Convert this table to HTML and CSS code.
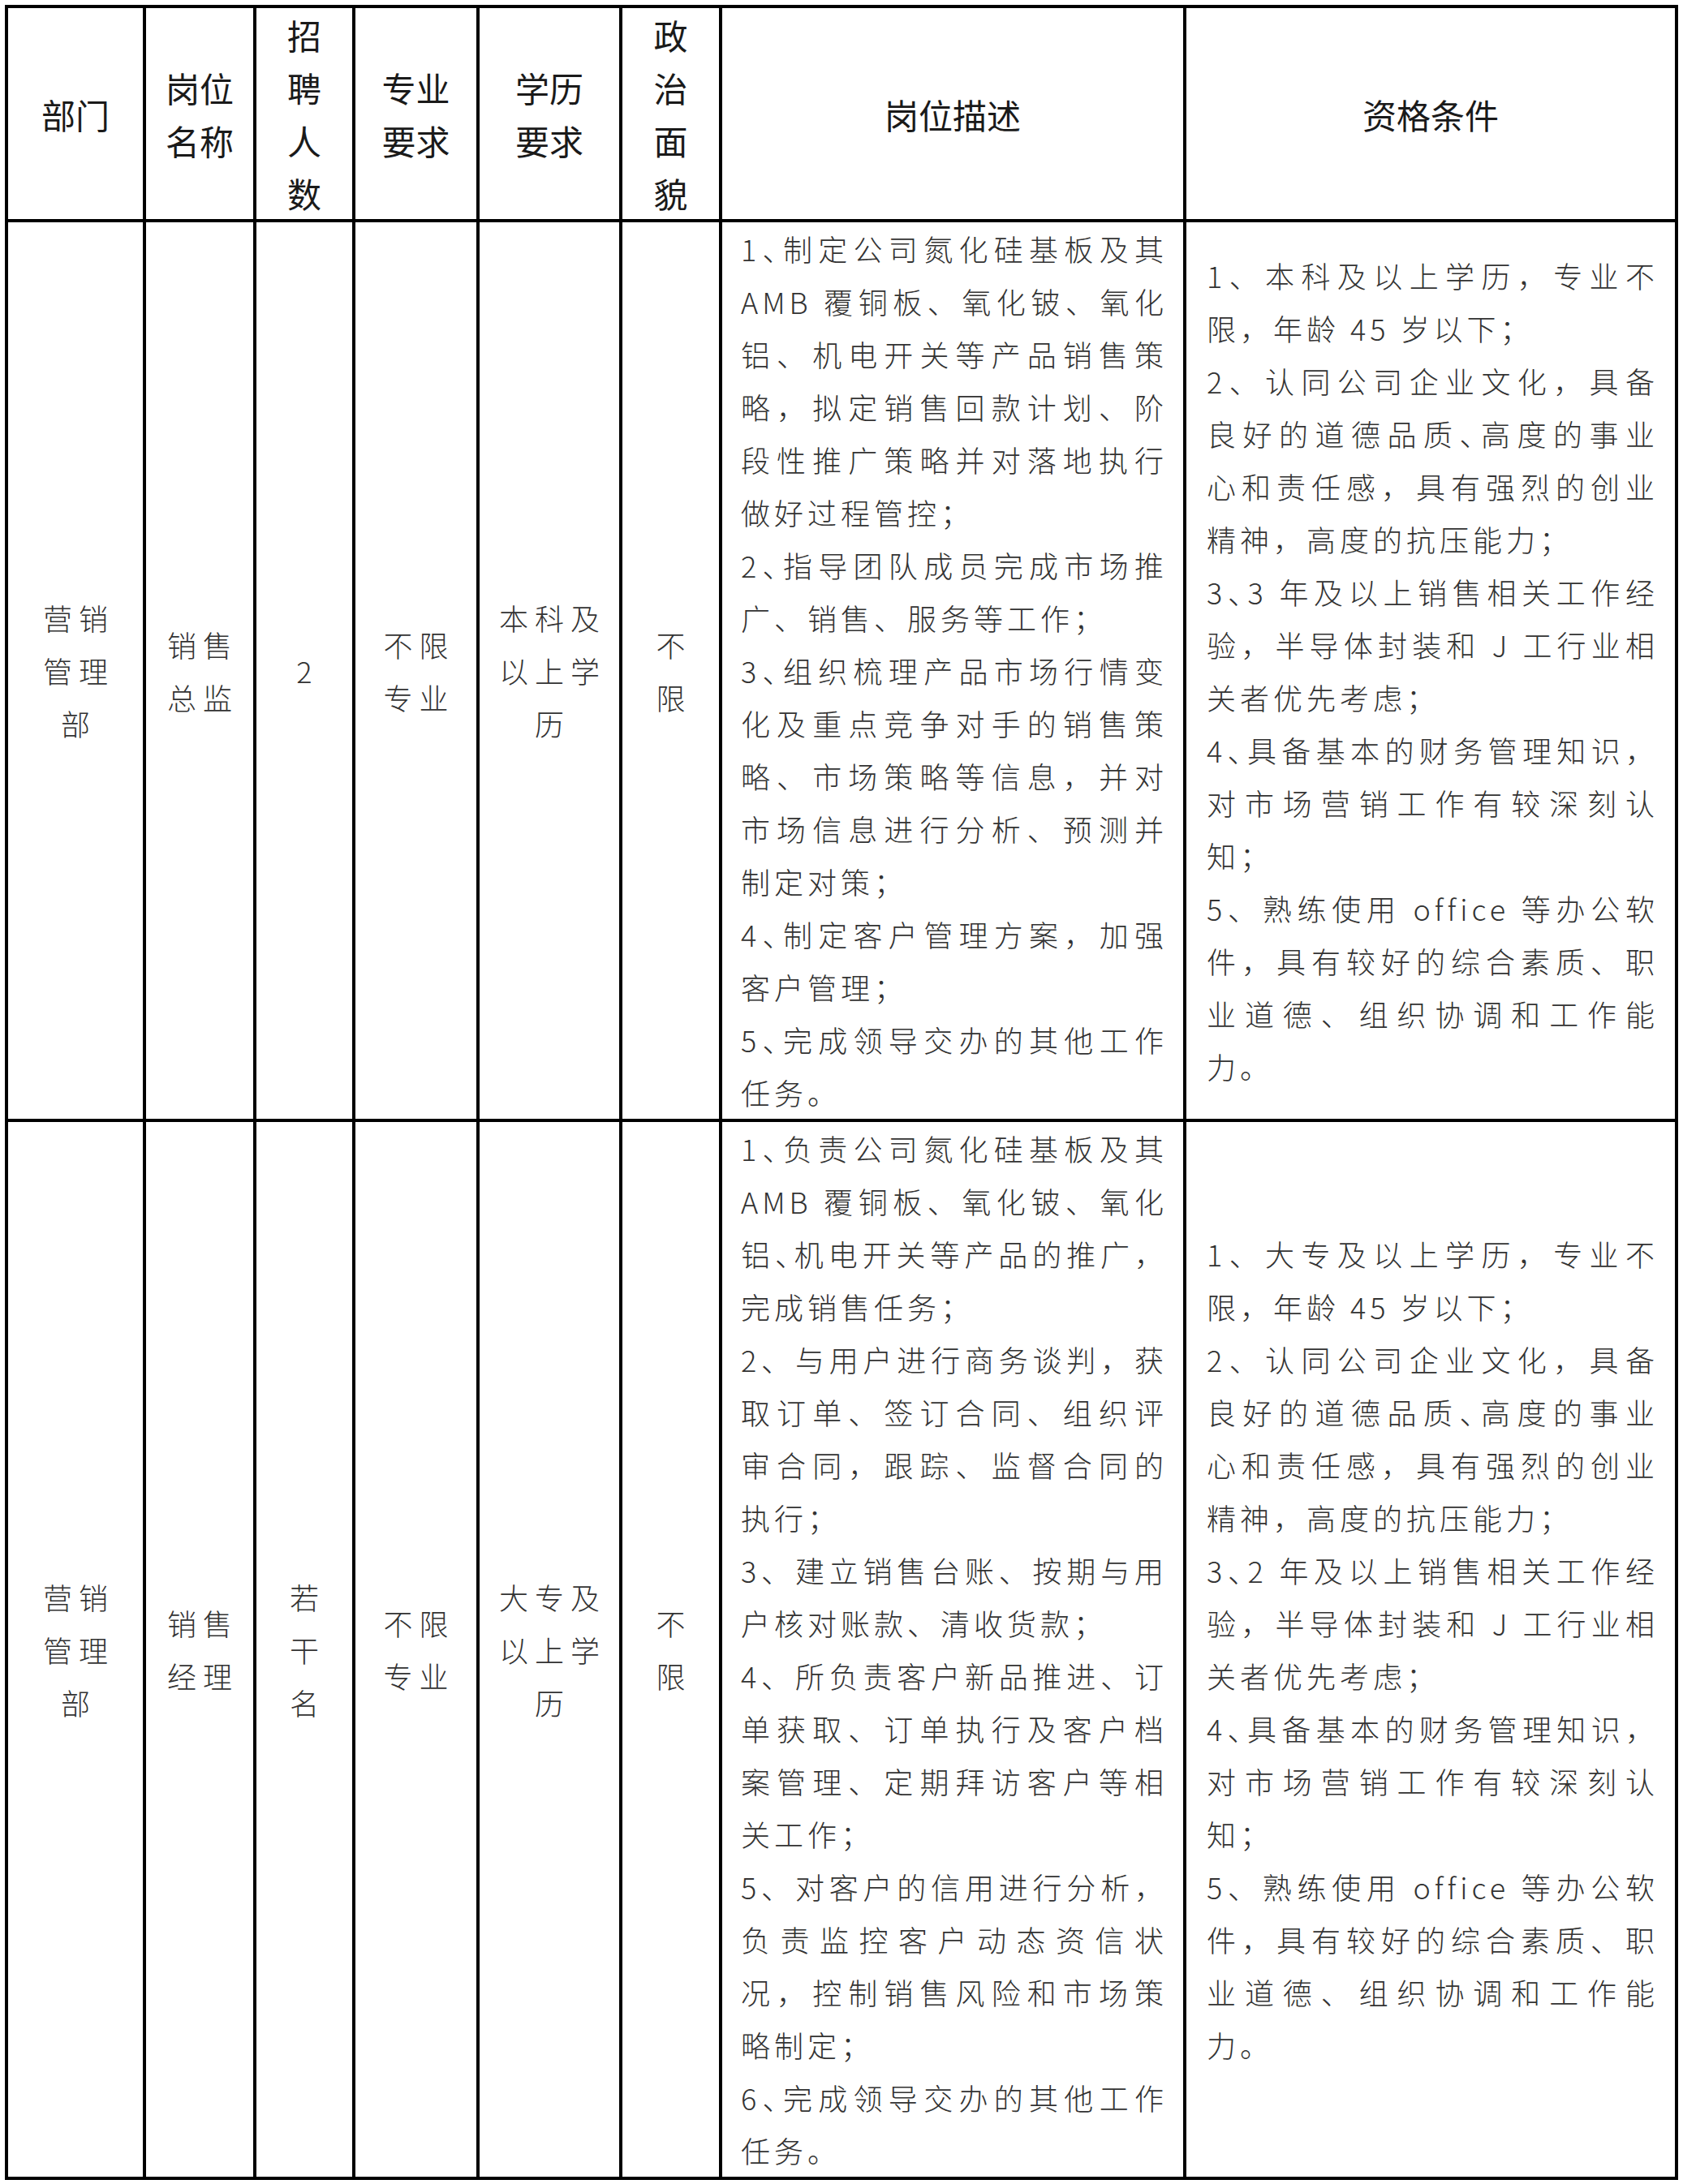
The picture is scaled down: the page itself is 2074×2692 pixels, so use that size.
FILE: index.html
```html
<!DOCTYPE html>
<html lang="zh-CN">
<head>
<meta charset="utf-8">
<title>招聘岗位表</title>
<link rel="stylesheet" href="styles.css">
</head>
<body>
<div class="sheet">
  <!-- header -->
  <div class="cell head">部门</div>
  <div class="cell head">岗位<br>名称</div>
  <div class="cell head">招<br>聘<br>人<br>数</div>
  <div class="cell head">专业<br>要求</div>
  <div class="cell head">学历<br>要求</div>
  <div class="cell head">政<br>治<br>面<br>貌</div>
  <div class="cell head">岗位描述</div>
  <div class="cell head">资格条件</div>

  <!-- row 1 -->
  <div class="cell mid">营销<br>管理<br>部</div>
  <div class="cell mid">销售<br>总监</div>
  <div class="cell mid">2</div>
  <div class="cell mid">不限<br>专业</div>
  <div class="cell mid">本科及<br>以上学<br>历</div>
  <div class="cell mid">不<br>限</div>
  <div class="cell desc">
    <p class="item">
      <span class="ln"><span class="no">1、</span>制定公司氮化硅基板及其</span>
      <span class="ln">AMB 覆铜板、氧化铍、氧化</span>
      <span class="ln">铝、机电开关等产品销售策</span>
      <span class="ln">略，拟定销售回款计划、阶</span>
      <span class="ln">段性推广策略并对落地执行</span>
      <span class="ln end">做好过程管控；</span>
    </p>
    <p class="item">
      <span class="ln"><span class="no">2、</span>指导团队成员完成市场推</span>
      <span class="ln end">广、销售、服务等工作；</span>
    </p>
    <p class="item">
      <span class="ln"><span class="no">3、</span>组织梳理产品市场行情变</span>
      <span class="ln">化及重点竞争对手的销售策</span>
      <span class="ln">略、市场策略等信息，并对</span>
      <span class="ln">市场信息进行分析、预测并</span>
      <span class="ln end">制定对策；</span>
    </p>
    <p class="item">
      <span class="ln"><span class="no">4、</span>制定客户管理方案，加强</span>
      <span class="ln end">客户管理；</span>
    </p>
    <p class="item">
      <span class="ln"><span class="no">5、</span>完成领导交办的其他工作</span>
      <span class="ln end">任务。</span>
    </p>
  </div>
  <div class="cell qual">
    <p class="item">
      <span class="ln">1、本科及以上学历，专业不</span>
      <span class="ln end">限，年龄 45 岁以下；</span>
    </p>
    <p class="item">
      <span class="ln">2、认同公司企业文化，具备</span>
      <span class="ln">良好的道德品质<span class="cp">、</span>高度的事业</span>
      <span class="ln">心和责任感，具有强烈的创业</span>
      <span class="ln end">精神，高度的抗压能力；</span>
    </p>
    <p class="item">
      <span class="ln"><span class="no">3、</span>3 年及以上销售相关工作经</span>
      <span class="ln">验，半导体封装和 J 工行业相</span>
      <span class="ln end">关者优先考虑；</span>
    </p>
    <p class="item">
      <span class="ln"><span class="no">4、</span>具备基本的财务管理知识，</span>
      <span class="ln">对市场营销工作有较深刻认</span>
      <span class="ln end">知；</span>
    </p>
    <p class="item">
      <span class="ln">5、熟练使用 office 等办公软</span>
      <span class="ln">件，具有较好的综合素质、职</span>
      <span class="ln">业道德、组织协调和工作能</span>
      <span class="ln end">力。</span>
    </p>
  </div>

  <!-- row 2 -->
  <div class="cell mid">营销<br>管理<br>部</div>
  <div class="cell mid">销售<br>经理</div>
  <div class="cell mid">若<br>干<br>名</div>
  <div class="cell mid">不限<br>专业</div>
  <div class="cell mid">大专及<br>以上学<br>历</div>
  <div class="cell mid">不<br>限</div>
  <div class="cell desc">
    <p class="item">
      <span class="ln"><span class="no">1、</span>负责公司氮化硅基板及其</span>
      <span class="ln">AMB 覆铜板、氧化铍、氧化</span>
      <span class="ln">铝<span class="cp">、</span>机电开关等产品的推广，</span>
      <span class="ln end">完成销售任务；</span>
    </p>
    <p class="item">
      <span class="ln">2、与用户进行商务谈判，获</span>
      <span class="ln">取订单、签订合同、组织评</span>
      <span class="ln">审合同，跟踪、监督合同的</span>
      <span class="ln end">执行；</span>
    </p>
    <p class="item">
      <span class="ln">3、建立销售台账、按期与用</span>
      <span class="ln end">户核对账款、清收货款；</span>
    </p>
    <p class="item">
      <span class="ln">4、所负责客户新品推进、订</span>
      <span class="ln">单获取、订单执行及客户档</span>
      <span class="ln">案管理、定期拜访客户等相</span>
      <span class="ln end">关工作；</span>
    </p>
    <p class="item">
      <span class="ln">5、对客户的信用进行分析，</span>
      <span class="ln">负责监控客户动态资信状</span>
      <span class="ln">况，控制销售风险和市场策</span>
      <span class="ln end">略制定；</span>
    </p>
    <p class="item">
      <span class="ln"><span class="no">6、</span>完成领导交办的其他工作</span>
      <span class="ln end">任务。</span>
    </p>
  </div>
  <div class="cell qual">
    <p class="item">
      <span class="ln">1、大专及以上学历，专业不</span>
      <span class="ln end">限，年龄 45 岁以下；</span>
    </p>
    <p class="item">
      <span class="ln">2、认同公司企业文化，具备</span>
      <span class="ln">良好的道德品质<span class="cp">、</span>高度的事业</span>
      <span class="ln">心和责任感，具有强烈的创业</span>
      <span class="ln end">精神，高度的抗压能力；</span>
    </p>
    <p class="item">
      <span class="ln"><span class="no">3、</span>2 年及以上销售相关工作经</span>
      <span class="ln">验，半导体封装和 J 工行业相</span>
      <span class="ln end">关者优先考虑；</span>
    </p>
    <p class="item">
      <span class="ln"><span class="no">4、</span>具备基本的财务管理知识，</span>
      <span class="ln">对市场营销工作有较深刻认</span>
      <span class="ln end">知；</span>
    </p>
    <p class="item">
      <span class="ln">5、熟练使用 office 等办公软</span>
      <span class="ln">件，具有较好的综合素质、职</span>
      <span class="ln">业道德、组织协调和工作能</span>
      <span class="ln end">力。</span>
    </p>
  </div>
</div>
</body>
</html>
```
FILE: styles.css
```css
html, body {
  margin: 0;
  padding: 0;
  background: #ffffff;
}

body {
  font-family: "Noto Sans CJK SC", "Noto Sans", sans-serif;
}

.sheet {
  display: grid;
  grid-template-columns: 166px 132px 118px 149px 172px 119px 568px 602px;
  gap: 4px;
  padding: 4px;
  margin: 6px;
  width: max-content;
  background: #000000;
}

.cell {
  background: #ffffff;
  display: flex;
  flex-direction: column;
  justify-content: center;
  line-height: 65px;
}

.head {
  align-items: center;
  text-align: center;
  font-size: 42px;
  font-weight: 400;
  color: #1a1a1a;
}

.mid {
  align-items: center;
  text-align: center;
  font-size: 36px;
  font-weight: 300;
  letter-spacing: 8px;
  padding-left: 8px;
  color: #333333;
}

.desc,
.qual {
  font-size: 36px;
  font-weight: 300;
  letter-spacing: 5px;
  color: #333333;
}

.desc {
  padding: 0 19px 0 23px;
  justify-content: flex-start;
}

.qual {
  padding: 0 20px 0 25px;
}

.item {
  margin: 0;
}

.ln {
  display: block;
  text-align: justify;
  text-align-last: justify;
}

.ln.end {
  text-align: left;
  text-align-last: left;
}

.no,
.cp {
  font-feature-settings: "halt" 1;
}
```
